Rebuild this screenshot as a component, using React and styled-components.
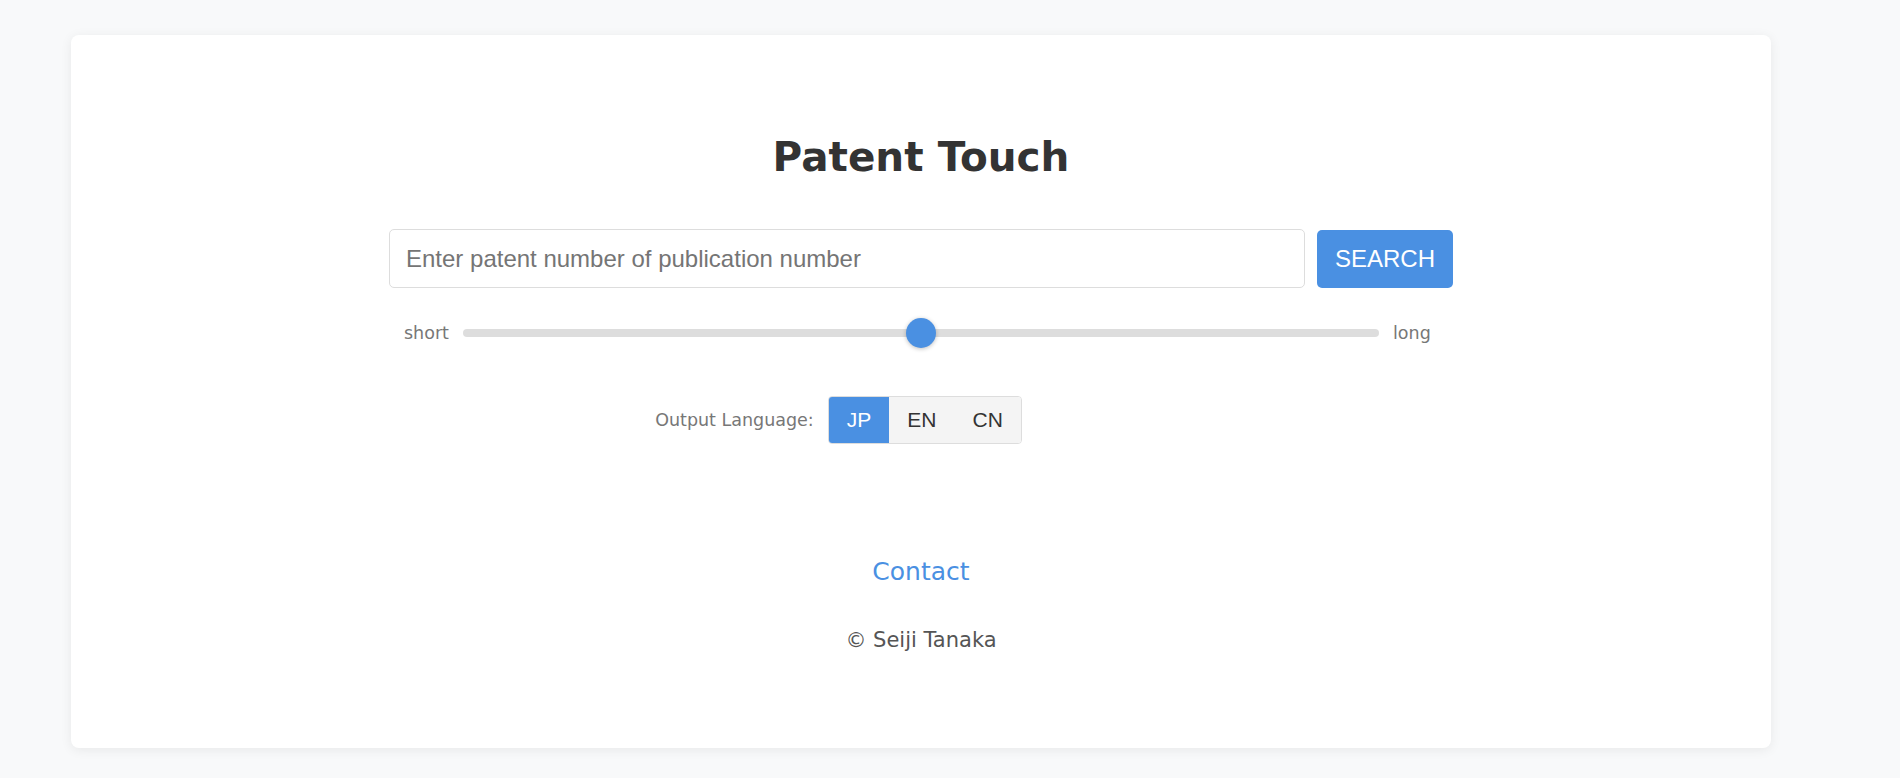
import { useState } from 'react';
import styled, { createGlobalStyle } from 'styled-components';

const GlobalStyle = createGlobalStyle`
  * {
    box-sizing: border-box;
  }
  body {
    margin: 0;
    background-color: #f8f9fa;
    font-family: "DejaVu Sans", Verdana, sans-serif;
    color: #333;
  }
`;

const LANGS = ['JP', 'EN', 'CN'];

function App() {
  const [length, setLength] = useState(50);
  const [lang, setLang] = useState('JP');
  const [query, setQuery] = useState('');

  return (
    <>
      <GlobalStyle />
      <Card>
        <Title>Patent Touch</Title>

        <SearchRow>
          <SearchInput
            type="text"
            value={query}
            onChange={(e) => setQuery(e.target.value)}
            placeholder="Enter patent number of publication number"
          />
          <SearchButton>SEARCH</SearchButton>
        </SearchRow>

        <SliderRow>
          <SliderLabel>short</SliderLabel>
          <Range
            type="range"
            min="0"
            max="100"
            value={length}
            onChange={(e) => setLength(e.target.value)}
          />
          <SliderLabel>long</SliderLabel>
        </SliderRow>

        <LangRow>
          <LangLabel>Output Language:</LangLabel>
          <LangGroup>
            {LANGS.map((l) => (
              <LangButton key={l} $active={lang === l} onClick={() => setLang(l)}>
                {l}
              </LangButton>
            ))}
          </LangGroup>
        </LangRow>

        <ContactLink href="#">Contact</ContactLink>
        <Copyright>© Seiji Tanaka</Copyright>
      </Card>
    </>
  );
}

export default App;

const Card = styled.main`
  width: 1700px;
  margin: 35px 0 30px 71px;
  padding: 98px 0 96px;
  background: #fff;
  border-radius: 8px;
  box-shadow: 0 2px 12px rgba(0, 0, 0, 0.07);
  display: flex;
  flex-direction: column;
  align-items: center;
`;

const Title = styled.h1`
  margin: 0;
  font-size: 40.5px;
  font-weight: bold;
  line-height: normal;
  color: #333;
`;

const SearchRow = styled.div`
  margin-top: 48px;
  width: 1064px;
  display: flex;
  gap: 12px;
  height: 59px;
`;

const SearchInput = styled.input`
  flex: 1;
  height: 59px;
  padding: 0 16px;
  border: 1px solid #ddd;
  border-radius: 5px;
  font-family: "Liberation Sans", Arial, sans-serif;
  font-size: 24px;
  color: #333;
  outline: none;
  &::placeholder {
    color: #757575;
  }
`;

const SearchButton = styled.button`
  width: 136px;
  height: 58px;
  margin-top: 1px;
  border: none;
  border-radius: 5px;
  background-color: #4a90e2;
  color: #fff;
  font-family: "Liberation Sans", Arial, sans-serif;
  font-size: 24px;
  cursor: pointer;
`;

const SliderRow = styled.div`
  margin-top: 30px;
  width: 1064px;
  height: 30px;
  padding: 0 15px;
  display: flex;
  align-items: center;
  gap: 14px;
`;

const SliderLabel = styled.span`
  width: 45px;
  font-size: 17.5px;
  color: #777;
`;

const Range = styled.input`
  flex: 1;
  margin: 0;
  height: 30px;
  -webkit-appearance: none;
  appearance: none;
  background: transparent;
  &::-webkit-slider-runnable-track {
    height: 8px;
    border-radius: 4px;
    background: #ddd;
  }
  &::-webkit-slider-thumb {
    -webkit-appearance: none;
    width: 30px;
    height: 30px;
    margin-top: -11px;
    border-radius: 50%;
    background: #4a90e2;
    box-shadow: 0 1px 4px rgba(0, 0, 0, 0.25);
    cursor: pointer;
  }
`;

const LangRow = styled.div`
  margin-top: 48px;
  width: 1064px;
  padding-right: 165px;
  display: flex;
  justify-content: center;
  align-items: center;
  gap: 14px;
`;

const LangLabel = styled.span`
  font-size: 17.5px;
  color: #777;
`;

const LangGroup = styled.div`
  display: flex;
  height: 48px;
  border: 1px solid #ddd;
  border-radius: 4px;
  overflow: hidden;
`;

const LangButton = styled.button`
  border: none;
  padding: 0 18px;
  font-family: "Liberation Sans", Arial, sans-serif;
  font-size: 21px;
  background-color: ${(p) => (p.$active ? '#4a90e2' : '#f4f4f4')};
  color: ${(p) => (p.$active ? '#fff' : '#333')};
  cursor: pointer;
`;

const ContactLink = styled.a`
  margin-top: 113px;
  font-size: 25px;
  line-height: normal;
  color: #4a90e2;
  text-decoration: none;
`;

const Copyright = styled.p`
  margin: 42px 0 0;
  font-size: 21px;
  line-height: normal;
  color: #555;
`;
